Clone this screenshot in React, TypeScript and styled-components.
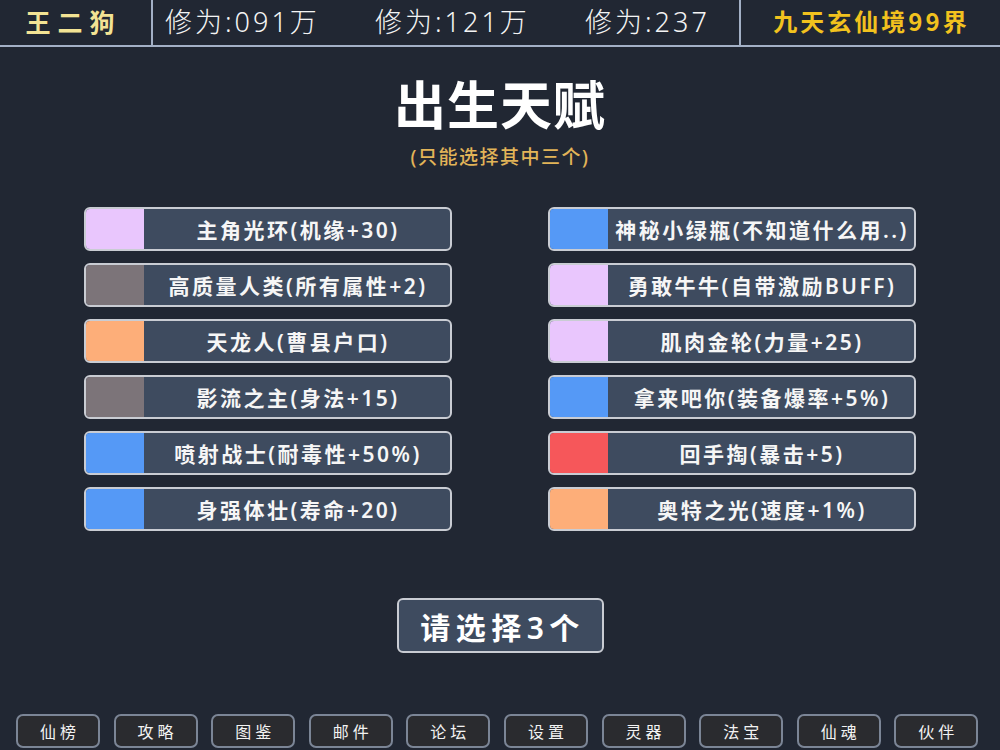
import React from "react";
import styled, { createGlobalStyle } from "styled-components";

const GlobalStyle = createGlobalStyle`
  html, body { margin: 0; padding: 0; background: #212733; }
  body { font-family: "Noto Sans", "Noto Sans CJK SC", sans-serif; }
  * { box-sizing: border-box; }
`;

const FONT = `"Noto Sans", "Noto Sans CJK SC", sans-serif`;

const Page = styled.div`
  width: 1000px;
  height: 750px;
  overflow: hidden;
  background: #212733;
  display: flex;
  flex-direction: column;
  align-items: center;
  color: #fff;
`;

const Header = styled.header`
  width: 100%;
  height: 47px;
  display: flex;
  border-bottom: 2px solid #a3b0c6;
`;

const NameCell = styled.div`
  width: 153px;
  flex-shrink: 0;
  display: flex;
  align-items: center;
  justify-content: center;
  border-right: 2px solid #a3b0c6;
  font-family: "Noto Sans CJK SC", serif;
  font-weight: 700;
  font-size: 25px;
  letter-spacing: 7px;
  color: #f3e394;
  padding: 0 4px 4px 0;
`;

const StatsCell = styled.div`
  flex: 1;
  min-width: 0;
  display: flex;
  align-items: center;
  padding: 0 0 4px 12px;
  border-right: 2px solid #a3b0c6;
`;

const Stat = styled.div`
  width: 210px;
  flex-shrink: 0;
  font-size: 27px;
  font-weight: 300;
  letter-spacing: 3px;
  color: #f4f4f4;
  white-space: nowrap;
  &:last-child { width: auto; }
`;

const RealmCell = styled.div`
  width: 259px;
  flex-shrink: 0;
  display: flex;
  align-items: center;
  justify-content: center;
  font-family: "Noto Sans CJK SC", serif;
  font-weight: 700;
  font-size: 24px;
  letter-spacing: 3px;
  color: #f2c21e;
  padding: 0 0 4px 2px;
`;

const Title = styled.h1`
  margin: 26px 0 0;
  font-family: "Noto Sans CJK SC", sans-serif;
  font-size: 52px;
  line-height: 60px;
  font-weight: 700;
  letter-spacing: 1px;
  color: #ffffff;
`;

const Subtitle = styled.div`
  margin-top: 12px;
  font-size: 19px;
  line-height: 24px;
  font-weight: 500;
  letter-spacing: 1.5px;
  color: #e2b458;
`;

const Grid = styled.div`
  margin-top: 38px;
  display: grid;
  grid-template-columns: 368px 368px;
  column-gap: 96px;
  row-gap: 12px;
`;

const Card = styled.div`
  height: 44px;
  display: flex;
  border: 2px solid #c9ccd3;
  border-radius: 6px;
  overflow: hidden;
  background: #3e4b5f;
`;

const Swatch = styled.div<{ $color: string }>`
  width: 58px;
  background: ${(p) => p.$color};
`;

const CardText = styled.div`
  flex: 1;
  display: flex;
  align-items: center;
  justify-content: center;
  font-size: 21px;
  font-weight: 600;
  letter-spacing: 2.5px;
  color: #f6f6f6;
  white-space: nowrap;
  padding-left: 2px;
`;

const ConfirmButton = styled.button`
  margin-top: 67px;
  width: 207px;
  height: 55px;
  border: 2px solid #c9ccd3;
  border-radius: 6px;
  background: #3e4b5f;
  color: #fff;
  font-family: ${FONT};
  font-size: 30px;
  font-weight: 600;
  letter-spacing: 5.5px;
  display: flex;
  align-items: center;
  justify-content: center;
  padding: 0 0 0 5px;
`;

const Nav = styled.nav`
  margin-top: 61px;
  width: 100%;
  display: flex;
  padding-left: 16px;
  gap: 13.6px;
`;

const NavButton = styled.button`
  width: 84px;
  height: 34px;
  border: 2px solid #7b8596;
  border-radius: 7px;
  background: #2a2b2f;
  color: #f2f2f2;
  font-family: "Noto Sans CJK SC", serif;
  font-size: 16px;
  letter-spacing: 4px;
  padding: 0 0 0 4px;
  display: flex;
  align-items: center;
  justify-content: center;
`;

const PINK = "#e9c6fd";
const GRAY = "#7c7479";
const ORANGE = "#fdae79";
const BLUE = "#5599f6";
const RED = "#f6575a";

const left: [string, string][] = [
  [PINK, "主角光环(机缘+30)"],
  [GRAY, "高质量人类(所有属性+2)"],
  [ORANGE, "天龙人(曹县户口)"],
  [GRAY, "影流之主(身法+15)"],
  [BLUE, "喷射战士(耐毒性+50%)"],
  [BLUE, "身强体壮(寿命+20)"],
];

const right: [string, string][] = [
  [BLUE, "神秘小绿瓶(不知道什么用..)"],
  [PINK, "勇敢牛牛(自带激励BUFF)"],
  [PINK, "肌肉金轮(力量+25)"],
  [BLUE, "拿来吧你(装备爆率+5%)"],
  [RED, "回手掏(暴击+5)"],
  [ORANGE, "奥特之光(速度+1%)"],
];

const navItems = ["仙榜", "攻略", "图鉴", "邮件", "论坛", "设置", "灵器", "法宝", "仙魂", "伙伴"];

export default function App() {
  const cells: [string, string][] = [];
  for (let i = 0; i < left.length; i++) {
    cells.push(left[i]);
    cells.push(right[i]);
  }
  return (
    <>
      <GlobalStyle />
      <Page>
        <Header>
          <NameCell>王二狗</NameCell>
          <StatsCell>
            <Stat>修为:091万</Stat>
            <Stat>修为:121万</Stat>
            <Stat>修为:237</Stat>
          </StatsCell>
          <RealmCell>九天玄仙境99界</RealmCell>
        </Header>
        <Title>出生天赋</Title>
        <Subtitle>(只能选择其中三个)</Subtitle>
        <Grid>
          {cells.map(([c, t]) => (
            <Card key={t}>
              <Swatch $color={c} />
              <CardText>{t}</CardText>
            </Card>
          ))}
        </Grid>
        <ConfirmButton>请选择3个</ConfirmButton>
        <Nav>
          {navItems.map((n) => (
            <NavButton key={n}>{n}</NavButton>
          ))}
        </Nav>
      </Page>
    </>
  );
}
